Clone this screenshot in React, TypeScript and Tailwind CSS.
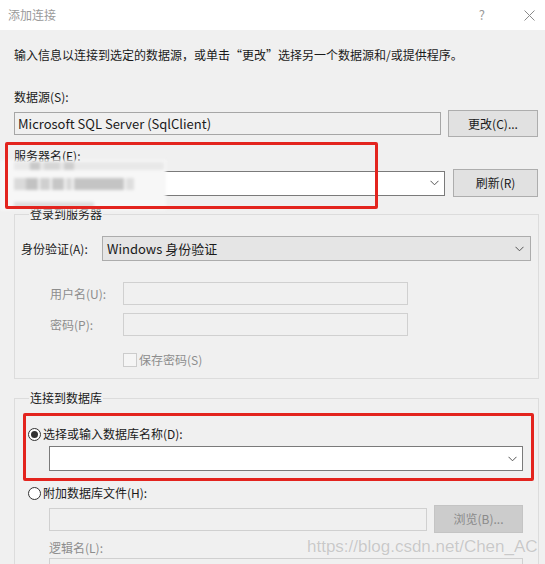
import React from "react";

const Chevron = ({ color = "#555" }: { color?: string }) => (
  <svg width="9" height="6" viewBox="0 0 9 6" fill="none">
    <path d="M0.5 0.8 L4.5 4.8 L8.5 0.8" stroke={color} strokeWidth="1" />
  </svg>
);

export default function App() {
  const font = { fontFamily: "'Noto Sans CJK SC', 'Noto Sans', sans-serif" };
  return (
    <div
      className="relative w-[545px] h-[564px] overflow-hidden bg-[#f0f0f0] text-[12px] leading-[16px] text-[#1a1a1a]"
      style={font}
    >
      {/* title bar */}
      <div className="h-[30px] bg-white flex items-center pl-[8px]">
        <span className="text-[#9a9a9a]">添加连接</span>
        <span className="ml-auto text-[#9a9a9a] text-[13px] mr-[39px]">?</span>
        <svg width="11" height="11" viewBox="0 0 11 11" className="mr-[10px]">
          <path d="M0.5 0.5 L10.5 10.5 M10.5 0.5 L0.5 10.5" stroke="#8a8a8a" strokeWidth="1" />
        </svg>
      </div>

      <div className="pl-[14px] pr-[6px]">
        <p className="mt-[17px]">输入信息以连接到选定的数据源，或单击“更改”选择另一个数据源和/或提供程序。</p>

        <p className="mt-[26px]">数据源(S):</p>
        <div className="mt-[5px] flex items-center gap-[7px]">
          <div className="w-[427px] h-[23px] border border-[#a6a6a6] flex items-center pl-[3px] text-[13px]">
            Microsoft SQL Server (SqlClient)
          </div>
          <div className="w-[90px] h-[27px] bg-[#e1e1e1] border border-[#adadad] flex items-center justify-center">
            更改(C)...
          </div>
        </div>

        <p className="mt-[11px]">服务器名(E):</p>
        <div className="mt-[5px] flex items-center gap-[8px]">
          <div className="w-[431px] h-[25px] bg-white border border-[#7a7a7a] flex items-center justify-end pr-[5px]">
            <Chevron />
          </div>
          <div className="w-[85px] h-[28px] bg-[#e1e1e1] border border-[#adadad] flex items-center justify-center">
            刷新(R)
          </div>
        </div>

        {/* login group */}
        <fieldset className="mt-[9px] w-[525px] border border-[#dcdcdc] pl-[6px] pb-[10px]">
          <legend className="ml-[8px] px-[1px]">登录到服务器</legend>
          <div className="mt-[14px] flex items-center">
            <span className="w-[81px]">身份验证(A):</span>
            <div className="w-[429px] h-[25px] bg-[#e5e5e5] border border-[#acacac] flex items-center pl-[4px] pr-[6px] text-[13px]">
              <span>Windows 身份验证</span>
              <span className="ml-auto">
                <Chevron />
              </span>
            </div>
          </div>
          <div className="mt-[21px] ml-[29px] flex items-center text-[#8d8d8d]">
            <span className="w-[73px]">用户名(U):</span>
            <div className="w-[285px] h-[23px] border border-[#d0d0d0]" />
          </div>
          <div className="mt-[8px] ml-[29px] flex items-center text-[#8d8d8d]">
            <span className="w-[73px]">密码(P):</span>
            <div className="w-[285px] h-[23px] border border-[#d0d0d0]" />
          </div>
          <div className="mt-[16px] ml-[102px] flex items-center text-[#8d8d8d]">
            <div className="w-[14px] h-[14px] border border-[#cccccc] bg-[#f5f5f5]" />
            <span className="ml-[2px]">保存密码(S)</span>
          </div>
        </fieldset>

        {/* database group */}
        <fieldset className="mt-[11px] w-[525px] border border-[#dcdcdc] pl-[6px] pb-[10px]">
          <legend className="ml-[8px] px-[1px]">连接到数据库</legend>
          <div className="mt-[20px] ml-[7px] flex items-center">
            <div className="w-[13px] h-[13px] rounded-full border border-[#333] bg-white flex items-center justify-center">
              <div className="w-[7px] h-[7px] rounded-full bg-[#333]" />
            </div>
            <span className="ml-[2px]">选择或输入数据库名称(D):</span>
          </div>
          <div className="mt-[4px] ml-[28px] w-[474px] h-[25px] bg-white border border-[#7a7a7a] flex items-center justify-end pr-[5px]">
            <Chevron />
          </div>
          <div className="mt-[14px] ml-[7px] flex items-center">
            <div className="w-[13px] h-[13px] rounded-full border border-[#333] bg-white" />
            <span className="ml-[2px]">附加数据库文件(H):</span>
          </div>
          <div className="mt-[4px] ml-[28px] flex items-center gap-[7px]">
            <div className="w-[378px] h-[23px] border border-[#d0d0d0]" />
            <div className="w-[89px] h-[28px] bg-[#cccccc] border border-[#c4c4c4] flex items-center justify-center text-[#8a8a8a]">
              浏览(B)...
            </div>
          </div>
          <p className="mt-[7px] ml-[28px] text-[#8d8d8d]">逻辑名(L):</p>
          <div className="mt-[2px] ml-[28px] w-[474px] h-[23px] border border-[#d0d0d0]" />
        </fieldset>
      </div>

      {/* blurred redaction */}
      <div className="absolute left-0 top-[160px] w-[166px] h-[50px] bg-[#f7f7f7] blur-[1.5px]">
        <div className="absolute left-[14px] top-[2px] w-[150px] h-[8px] bg-[#e8e8e8]" />
        <div className="absolute left-[30px] top-[2px] w-[10px] h-[8px] bg-[#c8c8c8]" />
        <div className="absolute left-[44px] top-[2px] w-[16px] h-[8px] bg-[#d6d6d6]" />
        <div className="absolute left-[64px] top-[2px] w-[10px] h-[8px] bg-[#cdcdcd]" />
        <div className="absolute left-[14px] top-[18px] w-[12px] h-[12px] bg-[#dadada]" />
        <div className="absolute left-[26px] top-[18px] w-[12px] h-[12px] bg-[#c2c2c2]" />
        <div className="absolute left-[40px] top-[18px] w-[10px] h-[12px] bg-[#cfcfcf]" />
        <div className="absolute left-[52px] top-[18px] w-[12px] h-[12px] bg-[#c6c6c6]" />
        <div className="absolute left-[66px] top-[18px] w-[6px] h-[12px] bg-[#d8d8d8]" />
        <div className="absolute left-[74px] top-[18px] w-[50px] h-[12px] bg-[#c4c4c4]" />
        <div className="absolute left-[126px] top-[18px] w-[8px] h-[12px] bg-[#dedede]" />
        <div className="absolute left-[14px] top-[42px] w-[80px] h-[6px] bg-[#dddddd]" />
      </div>

      {/* red annotations */}
      <div className="absolute left-[5px] top-[142px] w-[373px] h-[67px] border-[3px] border-[#e3241e] rounded-[2px]" />
      <div className="absolute left-[23px] top-[413px] w-[511px] h-[68px] border-[3px] border-[#e3241e] rounded-[2px]" />

      {/* watermark */}
      <div
        className="absolute left-[307px] top-[536px] text-[17px] leading-[22px] whitespace-nowrap text-[#c9c9c9] [text-shadow:0_0_1px_#ffffff]"
        style={{ fontFamily: "'Liberation Sans', Arial, sans-serif" }}
      >
        https://blog.csdn.net/Chen_AC
      </div>
    </div>
  );
}
